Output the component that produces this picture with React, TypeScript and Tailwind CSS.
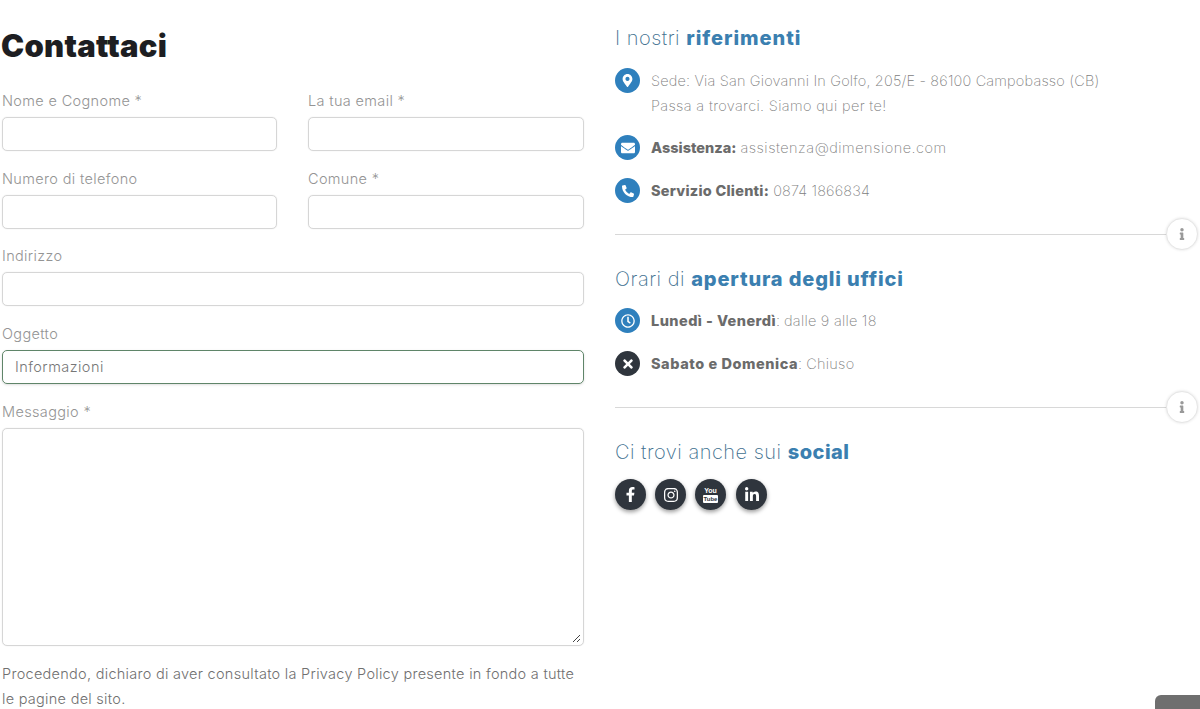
import type { ReactNode } from "react";
import { FaEnvelope, FaFacebookF, FaInfo, FaInstagram, FaLinkedinIn, FaMapMarkerAlt, FaPhoneAlt, FaRegClock, FaTimes } from "react-icons/fa";

const font = "font-['Inter',sans-serif]";

function Field({ label, className, value, focused }: { label: string; className?: string; value?: string; focused?: boolean }) {
  return (
    <div className={className}>
      <div className="h-[21px] text-[14.5px] leading-[21px] font-light tracking-[0.35px] text-[#949494]">{label}</div>
      <div
        className={
          focused
            ? "mt-[6px] flex h-[34px] items-center rounded-[5px] border border-[#5f8569] pl-[12px] text-[14.5px] font-light tracking-[0.45px] text-[#777] shadow-sm"
            : "mt-[6px] h-[34px] rounded-[5px] border border-[#d6d6d6] shadow-[0_0_1px_#d6d6d6]"
        }
      >
        {value}
      </div>
    </div>
  );
}

function Round({ children, dark }: { children: ReactNode; dark?: boolean }) {
  return (
    <span className={dark ? "flex h-[25px] w-[25px] shrink-0 items-center justify-center rounded-full bg-[#2f353d] text-white" : "flex h-[25px] w-[25px] shrink-0 items-center justify-center rounded-full bg-[#2f80bd] text-white"}>
      {children}
    </span>
  );
}

function Social({ children, className }: { children: ReactNode; className?: string }) {
  return (
    <span className={`${className ?? ""} flex h-[31px] w-[31px] items-center justify-center rounded-full bg-[#2f353d] text-white shadow-[0_2px_4px_rgba(0,0,0,0.4)]`}>
      {children}
    </span>
  );
}

function Divider() {
  return (
    <div className="flex items-center pr-[2px]">
      <div className="h-px flex-1 bg-[#d8d8d8]" />
      <span className="-ml-px flex h-[32px] w-[32px] items-center justify-center rounded-full border border-[#e6e6e6] bg-white text-[#999] shadow-[0_0_3px_rgba(0,0,0,0.12)]">
        <FaInfo size={12} />
      </span>
    </div>
  );
}

function Title({ light, bold, boldClass }: { light: string; bold: string; boldClass: string }) {
  return (
    <h2 className="text-[20px] leading-[26px] font-extralight tracking-[0.5px] text-[#41708f]">
      {light} <strong className={boldClass}>{bold}</strong>
    </h2>
  );
}

function Row({ icon, className, children }: { icon: ReactNode; className: string; children: ReactNode }) {
  return (
    <div className={`${className} flex items-center gap-[11px] text-[14.5px] font-extralight text-[#808080]`}>
      {icon}
      <span>{children}</span>
    </div>
  );
}

export default function App() {
  return (
    <main className={`${font} relative flex h-[709px] w-[1200px] overflow-hidden bg-white`}>
      <section className="ml-[2px] w-[582px] shrink-0">
        <h1 className="mt-[26px] -ml-px h-[40px] text-[31px] leading-[40px] font-black tracking-[0.25px] text-[#1d1e22]">Contattaci</h1>
        <div className="mt-[24px] grid grid-cols-[275px_276px] gap-x-[31px] gap-y-[16.7px]">
          <Field label="Nome e Cognome *" />
          <Field label="La tua email *" />
          <Field label="Numero di telefono" />
          <Field label="Comune *" />
          <Field className="col-span-2" label="Indirizzo" />
          <Field className="col-span-2" label="Oggetto" value="Informazioni" focused />
          <div className="col-span-2">
            <div className="h-[21px] text-[14.5px] leading-[21px] font-light tracking-[0.35px] text-[#949494]">Messaggio *</div>
            <div className="relative mt-[6px] h-[218px] rounded-[5px] border border-[#d6d6d6] shadow-[0_0_1px_#d6d6d6]">
              <svg className="absolute right-[2px] bottom-[2px]" width="9" height="9" viewBox="0 0 9 9" stroke="#444" strokeWidth="1">
                <path d="M1 8 8 1M5 8 8 5" />
              </svg>
            </div>
          </div>
        </div>
        <p className="mt-[15px] text-[14.5px] leading-[25px] font-light tracking-[0.28px] text-[#707070]">
          Procedendo, dichiaro di aver consultato la Privacy Policy presente in fondo a tutte le pagine del sito.
        </p>
      </section>
      <section className="ml-[31px] flex-1 pt-[25px]">
        <Title light="I nostri" bold="riferimenti" boldClass="font-extrabold tracking-[0.95px] text-[#3b7fb0]" />
        <div className="mt-[17px] flex gap-[11px] text-[14.5px] leading-[25px] font-extralight text-[#808080]">
          <Round><FaMapMarkerAlt size={13} /></Round>
          <div>
            <div className="tracking-[0.17px]">Sede: Via San Giovanni In Golfo, 205/E - 86100 Campobasso (CB)</div>
            <div className="tracking-[0.35px]">Passa a trovarci. Siamo qui per te!</div>
          </div>
        </div>
        <Row className="mt-[17px]" icon={<Round><FaEnvelope size={14} /></Round>}>
          <strong className="font-extrabold tracking-[0px] text-[#6b6b6b]">Assistenza:</strong> <span className="tracking-[0.5px]">assistenza@dimensione.com</span>
        </Row>
        <Row className="mt-[18px]" icon={<Round><FaPhoneAlt size={12} /></Round>}>
          <strong className="font-extrabold tracking-[0.24px] text-[#6b6b6b]">Servizio Clienti:</strong> <span className="tracking-[0.15px]">0874 1866834</span>
        </Row>
        <div className="mt-[15px]"><Divider /></div>
        <div className="mt-[16px]">
          <Title light="Orari di" bold="apertura degli uffici" boldClass="font-extrabold tracking-[0.85px] text-[#3b7fb0]" />
        </div>
        <Row className="mt-[16px]" icon={<Round><FaRegClock size={14} /></Round>}>
          <strong className="font-extrabold tracking-[0.45px] text-[#6b6b6b]">Lunedì - Venerdì</strong>: <span className="tracking-[0.25px]">dalle 9 alle 18</span>
        </Row>
        <Row className="mt-[18px]" icon={<Round dark><FaTimes size={14} /></Round>}>
          <strong className="font-extrabold tracking-[0.55px] text-[#6b6b6b]">Sabato e Domenica</strong>: <span className="tracking-[0.3px]">Chiuso</span>
        </Row>
        <div className="mt-[15px]"><Divider /></div>
        <div className="mt-[16px]">
          <Title light="Ci trovi anche sui" bold="social" boldClass="font-extrabold tracking-[0.5px] text-[#3b7fb0]" />
        </div>
        <div className="mt-[14px] flex gap-[9px]">
          <Social><FaFacebookF size={15} /></Social>
          <Social><FaInstagram size={16} /></Social>
          <Social>
            <span className="flex flex-col items-center font-['Liberation_Sans',sans-serif] font-bold">
              <span className="text-[7px] leading-[8px]">You</span>
              <span className="rounded-[1px] bg-white px-px text-[6px] leading-[8px] text-[#2f353d]">Tube</span>
            </span>
          </Social>
          <Social className="ml-px"><FaLinkedinIn size={16} /></Social>
        </div>
      </section>
      <div className="absolute right-0 bottom-0 h-[14px] w-[45px] rounded-tl-md bg-[#6f6f6f]" />
    </main>
  );
}
